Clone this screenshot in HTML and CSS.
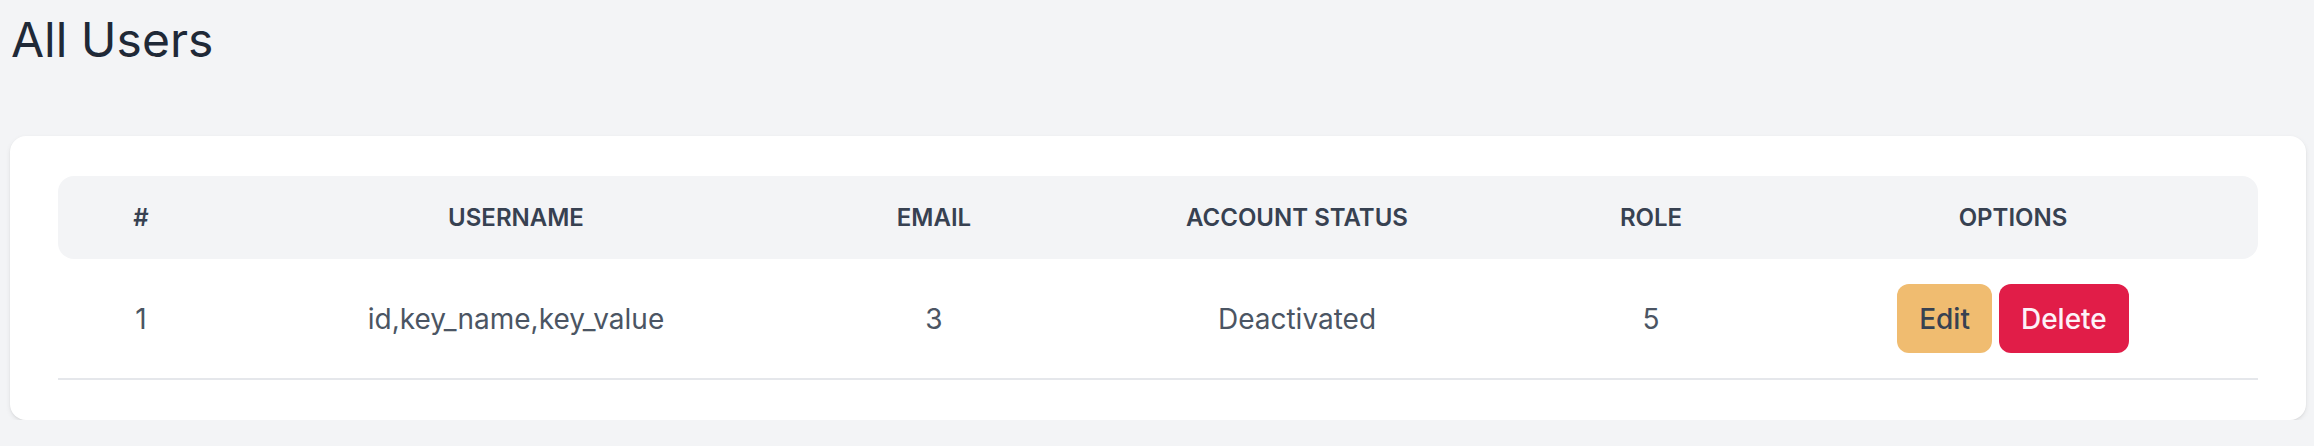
FILE: index.html
```html
<!DOCTYPE html>
<html lang="en">
<head>
<meta charset="utf-8">
<title>All Users</title>
<link rel="stylesheet" href="styles.css">
</head>
<body>
<main class="page">
  <h1 class="title">All Users</h1>
  <section class="card">
    <table class="users">
      <colgroup>
        <col class="c-num">
        <col class="c-user">
        <col class="c-email">
        <col class="c-status">
        <col class="c-role">
        <col class="c-opts">
      </colgroup>
      <thead>
        <tr>
          <th>#</th>
          <th>Username</th>
          <th>Email</th>
          <th>Account Status</th>
          <th>Role</th>
          <th>Options</th>
        </tr>
      </thead>
      <tbody>
        <tr>
          <td>1</td>
          <td>id,key_name,key_value</td>
          <td>3</td>
          <td>Deactivated</td>
          <td>5</td>
          <td>
            <div class="actions">
              <button class="btn btn-edit" type="button">Edit</button>
              <button class="btn btn-delete" type="button">Delete</button>
            </div>
          </td>
        </tr>
      </tbody>
    </table>
  </section>
</main>
</body>
</html>
```

FILE: styles.css
```css
* { box-sizing: border-box; }

html, body {
  margin: 0;
  padding: 0;
  background: #f3f4f6;
  font-family: Inter, "Noto Sans", "Liberation Sans", sans-serif;
}

.page {
  padding: 8px 8px 0 10px;
}

.title {
  margin: 0 0 64px;
  padding-left: 1px;
  font-size: 48px;
  line-height: 64px;
  font-weight: 400;
  color: #1f2937;
}

.card {
  background: #ffffff;
  border-radius: 16px;
  box-shadow: 0 2px 5px rgba(0, 0, 0, 0.08), 0 1px 2px rgba(0, 0, 0, 0.05);
  padding: 40px 48px;
}

.users {
  width: 100%;
  table-layout: fixed;
  border-collapse: separate;
  border-spacing: 0;
}

.c-num { width: 166px; }
.c-user { width: 584px; }
.c-email { width: 252px; }
.c-status { width: 474px; }
.c-role { width: 234px; }
.c-opts { width: 490px; }

.users th {
  height: 83px;
  padding: 0;
  background: #f3f4f6;
  color: #374151;
  font-size: 24px;
  font-weight: 600;
  text-transform: uppercase;
  text-align: center;
  vertical-align: middle;
}

.users th:first-child { border-radius: 16px 0 0 16px; }
.users th:last-child { border-radius: 0 16px 16px 0; }

.users td {
  height: 121px;
  padding: 0;
  border-bottom: 2px solid #e5e7eb;
  color: #4b5563;
  font-size: 28px;
  line-height: 40px;
  text-align: center;
  vertical-align: middle;
}

.actions {
  display: flex;
  justify-content: center;
  gap: 7px;
}

.btn {
  height: 69px;
  padding: 0 22px;
  border: 0;
  border-radius: 12px;
  font-family: Inter, "Noto Sans", sans-serif;
  font-size: 28px;
  font-weight: 500;
  cursor: pointer;
}

.btn-edit {
  background: #f0bc70;
  color: #374151;
}

.btn-delete {
  background: #e11d48;
  color: #fdf2f8;
}
```
